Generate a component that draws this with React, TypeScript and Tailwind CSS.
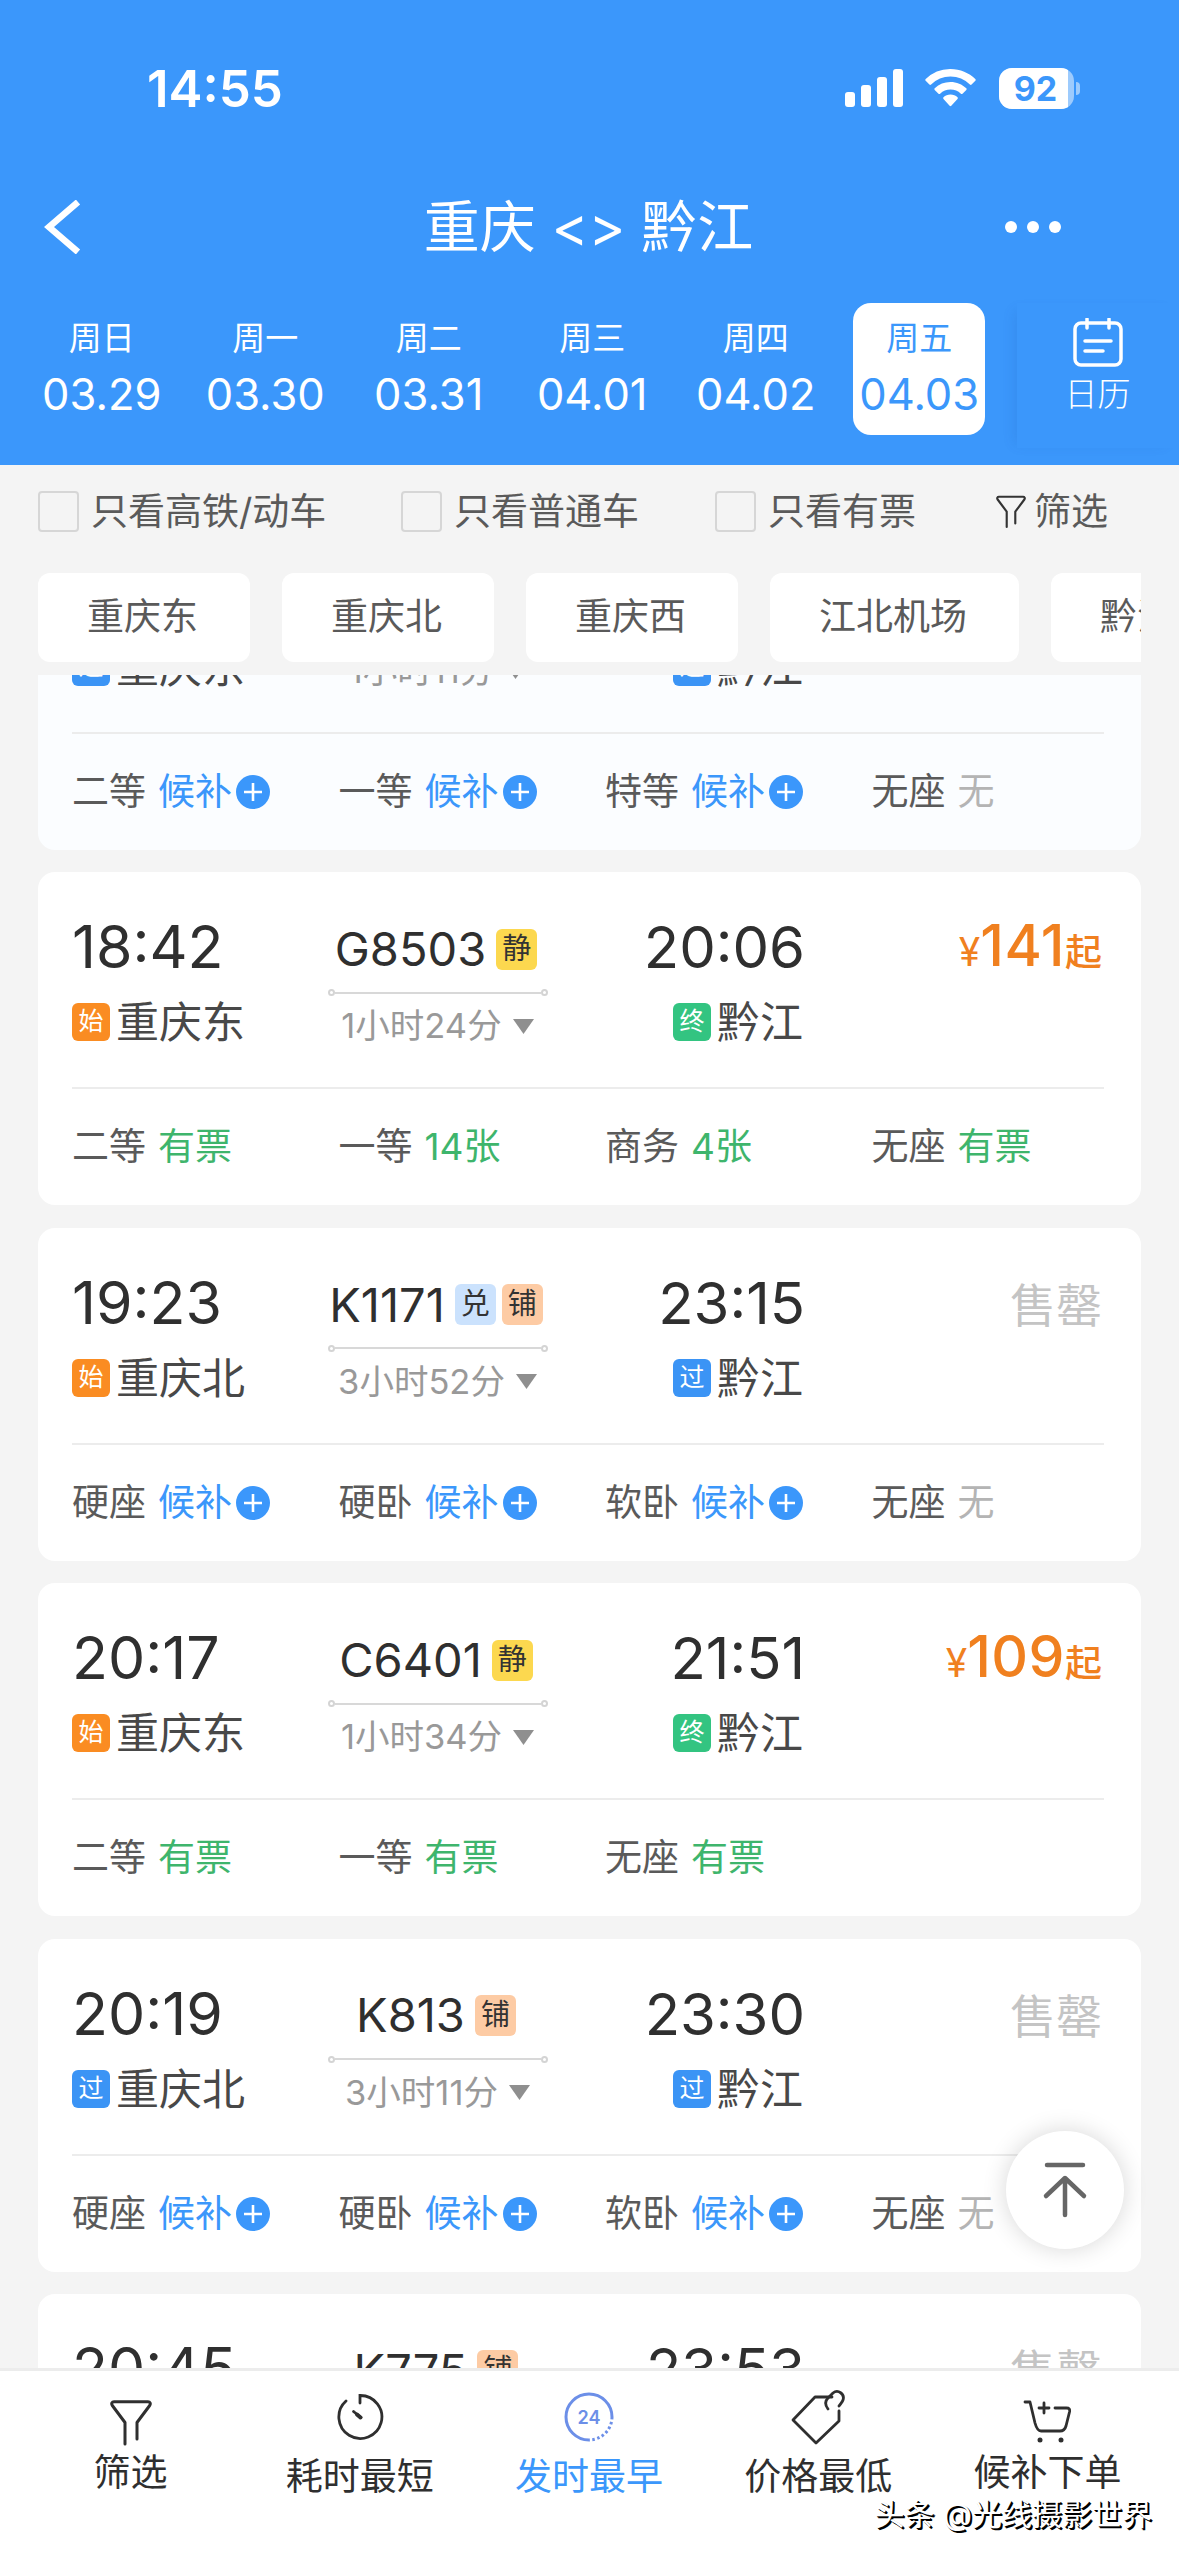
import clsx from "clsx";
import { ReactNode } from "react";

type Stop = { kind: "始" | "过" | "终"; name: string };
type Seat = { type: string; left: string };
type Train = {
  no: string;
  depart: string;
  arrive: string;
  from: Stop;
  to: Stop;
  duration: string;
  tags: string[];
  price?: string;
  seats: Seat[];
  expired?: boolean;
};

const days = [
  { week: "周日", date: "03.29" },
  { week: "周一", date: "03.30" },
  { week: "周二", date: "03.31" },
  { week: "周三", date: "04.01" },
  { week: "周四", date: "04.02" },
  { week: "周五", date: "04.03", active: true },
];

const stations = ["重庆东", "重庆北", "重庆西", "江北机场", "黔江"];

const waitlistSeats: Seat[] = [
  { type: "硬座", left: "候补" },
  { type: "硬卧", left: "候补" },
  { type: "软卧", left: "候补" },
  { type: "无座", left: "无" },
];

const trains: Train[] = [
  {
    no: "G3723",
    depart: "18:31",
    arrive: "19:42",
    from: { kind: "过", name: "重庆东" },
    to: { kind: "过", name: "黔江" },
    duration: "1小时11分",
    tags: [],
    expired: true,
    seats: [
      { type: "二等", left: "候补" },
      { type: "一等", left: "候补" },
      { type: "特等", left: "候补" },
      { type: "无座", left: "无" },
    ],
  },
  {
    no: "G8503",
    depart: "18:42",
    arrive: "20:06",
    from: { kind: "始", name: "重庆东" },
    to: { kind: "终", name: "黔江" },
    duration: "1小时24分",
    tags: ["静"],
    price: "141",
    seats: [
      { type: "二等", left: "有票" },
      { type: "一等", left: "14张" },
      { type: "商务", left: "4张" },
      { type: "无座", left: "有票" },
    ],
  },
  {
    no: "K1171",
    depart: "19:23",
    arrive: "23:15",
    from: { kind: "始", name: "重庆北" },
    to: { kind: "过", name: "黔江" },
    duration: "3小时52分",
    tags: ["兑", "铺"],
    seats: waitlistSeats,
  },
  {
    no: "C6401",
    depart: "20:17",
    arrive: "21:51",
    from: { kind: "始", name: "重庆东" },
    to: { kind: "终", name: "黔江" },
    duration: "1小时34分",
    tags: ["静"],
    price: "109",
    seats: [
      { type: "二等", left: "有票" },
      { type: "一等", left: "有票" },
      { type: "无座", left: "有票" },
    ],
  },
  {
    no: "K813",
    depart: "20:19",
    arrive: "23:30",
    from: { kind: "过", name: "重庆北" },
    to: { kind: "过", name: "黔江" },
    duration: "3小时11分",
    tags: ["铺"],
    seats: waitlistSeats,
  },
  {
    no: "K775",
    depart: "20:45",
    arrive: "23:53",
    from: { kind: "过", name: "重庆北" },
    to: { kind: "过", name: "黔江" },
    duration: "3小时8分",
    tags: ["铺"],
    seats: waitlistSeats,
  },
];

const stopColors = {
  始: "bg-[#fa8c22]",
  过: "bg-[#3b94f5]",
  终: "bg-[#33c481]",
};

const tagColors: Record<string, string> = {
  静: "bg-[#fcd84f]",
  兑: "bg-[#cbe2fd]",
  铺: "bg-[#fdcba4]",
};

function StatusBar() {
  return (
    <div className="h-[176px] pt-[58px] pl-[147px] pr-[99px] flex items-start justify-between">
      <span className="text-[51px] leading-[62px] font-semibold">14:55</span>
      <div className="flex items-center h-[60px]">
        <svg width="58" height="38" viewBox="0 0 58 38" fill="white" className="mr-[22px]">
          <rect x="0" y="23" width="10" height="15" rx="3" />
          <rect x="16" y="16" width="10" height="22" rx="3" />
          <rect x="32" y="8" width="10" height="30" rx="3" />
          <rect x="48" y="0" width="10" height="38" rx="3" />
        </svg>
        <svg width="51" height="38" viewBox="0 0 51 38" fill="white" className="mr-[23px]">
          <path d="M25.500 0C35.200 0 44 3.800 50.300 10.100a1.200 1.200 0 0 1 0 1.700l-3.700 3.700a1.200 1.200 0 0 1-1.700 0A27.600 27.600 0 0 0 25.500 7.500 27.600 27.600 0 0 0 6.100 15.500a1.200 1.200 0 0 1-1.700 0L.7 11.800a1.200 1.200 0 0 1 0-1.700A35 35 0 0 1 25.500 0Z" />
          <path d="M25.500 13c6.100 0 11.700 2.400 15.800 6.300a1.200 1.200 0 0 1 0 1.700l-3.800 3.700a1.200 1.200 0 0 1-1.600 0 15 15 0 0 0-20.800 0 1.200 1.200 0 0 1-1.600 0L9.700 21a1.200 1.200 0 0 1 0-1.700A22.800 22.800 0 0 1 25.500 13Z" />
          <path d="M25.500 25.500c2.700 0 5.200 1 7 2.700a1.200 1.200 0 0 1 0 1.700l-6.200 6.800a1.200 1.200 0 0 1-1.700 0l-6.100-6.800a1.200 1.200 0 0 1 0-1.700c1.800-1.700 4.300-2.700 7-2.700Z" />
        </svg>
        <div className="w-[75px] h-[41px] rounded-[13px] overflow-hidden bg-white/50 flex">
          <div className="w-[69px] pl-[4px] bg-white text-[#3b97fb] text-[34px] leading-[41px] font-bold text-center">92</div>
        </div>
        <div className="w-[4px] h-[13px] ml-[2px] rounded-r-full bg-white/50" />
      </div>
    </div>
  );
}

function DateTabs() {
  return (
    <div className="h-[162px] flex">
      <div className="pl-[20px] flex w-[1017px]">
        {days.map((day) => (
          <div key={day.date} className="w-[163.500px] shrink-0 flex justify-center">
            <div
              className={clsx(
                "w-[132px] h-[132px] pt-[11px] rounded-[18px] flex flex-col items-center",
                day.active && "bg-white text-[#3b97fb]"
              )}
            >
              <span className="text-[33px] leading-[48px]">{day.week}</span>
              <span className="text-[43.500px] leading-[64px] whitespace-nowrap">{day.date}</span>
            </div>
          </div>
        ))}
      </div>
      <div className="flex-1 h-[145px] flex flex-col items-center pt-[15px] pr-[1px] shadow-[-8px_2px_12px_-6px_rgba(20,80,160,0.14)]">
        <svg width="50" height="50" viewBox="0 0 50 50" fill="none" stroke="white" strokeWidth="3.500" strokeLinecap="round">
          <rect x="2" y="5" width="46" height="42" rx="6" />
          <path d="M14 1v9M36 1v9M12 23h26M12 33h18" />
        </svg>
        <span className="text-[33px] leading-[46px] mt-[3px] font-light">日历</span>
      </div>
    </div>
  );
}

function FunnelIcon({ className }: { className?: string }) {
  return (
    <svg viewBox="0 0 42 46" fill="none" stroke="currentColor" strokeWidth="3" strokeLinecap="round" strokeLinejoin="round" className={className}>
      <path d="M15 44V22.500L2.300 5.500C1 3.500 2 1.700 4 1.700h34c2 0 3 1.800 1.700 3.800L27 22.500V39" />
    </svg>
  );
}

function CheckFilter({ label, className }: { label: string; className?: string }) {
  return (
    <label className={clsx("flex items-center", className)}>
      <span className="w-[41px] h-[41px] border-2 border-[#d6d6d6] rounded-[4px] mr-[12px]" />
      {label}
    </label>
  );
}

function Filters() {
  return (
    <>
      <div className="h-[108px] pb-[15px] pl-[38px] flex items-center text-[37px] text-[#5a5a5a]">
        <CheckFilter label="只看高铁/动车" className="w-[363px]" />
        <CheckFilter label="只看普通车" className="w-[314px]" />
        <CheckFilter label="只看有票" className="w-[281px]" />
        <FunnelIcon className="w-[30px] h-[34px] mr-[8px] text-[#333]" />
        <span>筛选</span>
      </div>
      <div className="mx-[38px] flex gap-[32px] overflow-hidden text-[37px] text-[#5a5a5a]">
        {stations.map((name) => (
          <div key={name} className="h-[89px] pl-[49px] pr-[52px] bg-white rounded-[12px] flex items-center shrink-0 pb-[2px]">
            {name}
          </div>
        ))}
      </div>
    </>
  );
}

function StopName({ stop }: { stop: Stop }) {
  return (
    <div className="flex items-center text-[43px] leading-[60px] text-[#484848]">
      <span className={clsx("w-[38px] h-[38px] mr-[6px] rounded-[6px] text-white text-[25px] leading-[37px] text-center", stopColors[stop.kind])}>
        {stop.kind}
      </span>
      {stop.name}
    </div>
  );
}

function SeatInfo({ seat }: { seat: Seat }) {
  const waiting = seat.left === "候补";

  return (
    <div className="w-[266.500px] shrink-0 flex items-center text-[37px] leading-[54px] text-[#5a5a5a]">
      <span className="mr-[12px]">{seat.type}</span>
      <span className={waiting ? "text-[#3b97fb]" : seat.left === "无" ? "text-[#b4b4b4]" : "text-[#3eb56c]"}>{seat.left}</span>
      {waiting && (
        <svg width="34" height="34" viewBox="0 0 34 34" className="ml-[4px]">
          <circle cx="17" cy="17" r="17" fill="#3b97fb" />
          <path d="M8 17h18M17 8v18" stroke="white" strokeWidth="2.600" />
        </svg>
      )}
    </div>
  );
}

function TrainCard({ train }: { train: Train }) {
  return (
    <div className={clsx("h-[333px] shrink-0 pl-[34px] pr-[37px] rounded-[17px]", train.expired ? "bg-[#fbfdff]" : "bg-white")}>
      <div className="h-[217px] pt-[39px] flex border-b-2 border-[#ececec]">
        <div className="w-[250px]">
          <div className="text-[59px] leading-[72px] text-[#2f2f2f]">{train.depart}</div>
          <div className="mt-[9px]">
            <StopName stop={train.from} />
          </div>
        </div>

        {/* train number, tags and travel time */}
        <div className="w-[232px] flex flex-col items-center">
          <div className="h-[76px] mr-[4px] flex items-center gap-[6px] whitespace-nowrap">
            <span className="text-[47px] mr-[4px] text-[#2f2f2f]">{train.no}</span>
            {train.tags.map((tag) => (
              <span key={tag} className={clsx("w-[41px] h-[41px] rounded-[6px] text-[29px] leading-[39px] text-center text-[#333]", tagColors[tag])}>
                {tag}
              </span>
            ))}
          </div>
          <div className="w-[220px] h-[7px] mt-[2px] flex items-center">
            <span className="w-[7px] h-[7px] rounded-full border-2 border-[#d4d4d4]" />
            <span className="flex-1 h-[2px] bg-[#d8d8d8]" />
            <span className="w-[7px] h-[7px] rounded-full border-2 border-[#d4d4d4]" />
          </div>
          <div className="flex items-center mt-[4px] text-[34.500px] leading-[52px] text-[#999]">
            {train.duration}
            <svg width="23" height="15" viewBox="0 0 23 15" className="ml-[10px]">
              <path d="M1 0h21L11.500 15Z" fill="#8f8f8f" />
            </svg>
          </div>
        </div>

        <div className="w-[250px] flex flex-col items-end">
          <div className="text-[58px] leading-[72px] -mr-px text-[#2f2f2f]">{train.arrive}</div>
          <div className="mt-[9px] mr-px">
            <StopName stop={train.to} />
          </div>
        </div>

        <div className="w-[300px] pr-[2px] text-right">
          {train.price ? (
            <div className="text-[#f0801f] leading-[70px] font-medium">
              <span className="text-[39px] font-normal">¥</span>
              <span className="text-[57px] tracking-[0.5px]">{train.price}</span>
              <span className="text-[37px]">起</span>
            </div>
          ) : (
            <div className="text-[46px] leading-[76px] text-[#c4c4c4]">售罄</div>
          )}
        </div>
      </div>
      <div className="flex pt-[31px]">
        {train.seats.map((seat) => (
          <SeatInfo key={seat.type} seat={seat} />
        ))}
      </div>
    </div>
  );
}

function NavItem({ label, active, className, children }: { label: string; active?: boolean; className?: string; children: ReactNode }) {
  return (
    <div className={clsx("flex-1 flex flex-col items-center text-[37px] leading-[50px]", active ? "text-[#3b97fb]" : "text-[#2f2f2f]", className)}>
      {children}
      <span className="whitespace-nowrap">{label}</span>
    </div>
  );
}

function BottomNav() {
  return (
    <div className="h-[188px] shrink-0 bg-white border-t-3 border-[#ececec] pl-[16px] pr-[17px] flex relative">
      <NavItem label="筛选" className="pt-[29px]">
        <FunnelIcon className="w-[42px] h-[46px] mb-[2px]" />
      </NavItem>
      <NavItem label="耗时最短" className="pt-[22px]">
        <svg width="48" height="48" viewBox="0 0 48 48" fill="none" stroke="currentColor" strokeWidth="2.800" strokeLinecap="round" className="mb-[11px]">
          <path d="M24 10V2.500a21.500 21.500 0 1 1-14 5.500" />
          <path d="m17.500 18.500 7.500 6" />
          <path d="m21 21.500 3.500 3" strokeWidth="4" />
        </svg>
      </NavItem>
      <NavItem label="发时最早" active className="pt-[21px]">
        <svg width="50" height="50" viewBox="0 0 50 50" fill="none" stroke="#6c8fe8" strokeWidth="3" className="mb-[10px]">
          <path d="M25 48A23 23 0 1 1 48 25" />
          <path d="M48 25A23 23 0 0 1 25 48" strokeDasharray="2.500 2.500" />
          <text x="25" y="32" fill="#6c8fe8" stroke="none" fontSize="18" fontWeight="600" textAnchor="middle">
            24
          </text>
        </svg>
      </NavItem>
      <NavItem label="价格最低" className="pt-[18px]">
        <svg width="58" height="58" viewBox="0 0 58 58" fill="none" stroke="currentColor" strokeWidth="2.800" strokeLinecap="round" strokeLinejoin="round" className="mb-[5px]">
          <path d="M43 8H26L4 31l23 23 23-22V22" />
          <path d="M39 20c-3-4-3-8 0-11l5-5c5-4 12 1 10 7-.7 2-2 3-4 6" />
        </svg>
      </NavItem>
      <NavItem label="候补下单" className="pt-[28px]">
        <svg width="48" height="45" viewBox="0 0 48 45" fill="none" stroke="currentColor" strokeWidth="2.800" strokeLinecap="round" strokeLinejoin="round" className="mb-[4px]">
          <path d="M2 3h5l5 21c1.500 5.500 3 8 6 8h19c3 0 5-1.500 6-5l3.500-14c.6-3-.5-4-3-4H32" />
          <path d="M21 4v10M16 9h10" />
          <circle cx="17" cy="41" r="2.500" fill="currentColor" stroke="none" />
          <circle cx="38" cy="41" r="2.500" fill="currentColor" stroke="none" />
        </svg>
      </NavItem>
      <span className="absolute right-[27px] bottom-[20px] text-[30px] leading-[44px] text-white whitespace-nowrap [text-shadow:2px_2px_0_#000,1px_1px_0_#000]">
        头条 @光线摄影世界
      </span>
    </div>
  );
}

export default function App() {
  return (
    <div className="w-[1179px] h-[2556px] overflow-hidden bg-[#f4f4f4] flex flex-col relative font-[Inter,'Noto_Sans_CJK_SC',sans-serif]">
      <header className="h-[465px] shrink-0 bg-[#3b97fb] text-white">
        <StatusBar />
        <div className="h-[127px] pb-[25px] pl-[44px] pr-[44px] flex items-center justify-between">
          <svg width="128" height="54" viewBox="0 0 128 54" fill="none" stroke="white" strokeWidth="6.500">
            <path d="M34 2 5 27l29 25" />
          </svg>
          <h1 className="text-[56px] leading-[80px] whitespace-pre">重庆 &lt;&gt; 黔江</h1>
          <svg width="130" height="12" viewBox="0 0 130 12" fill="white">
            <circle cx="6" cy="6" r="6" />
            <circle cx="28" cy="6" r="6" />
            <circle cx="50" cy="6" r="6" />
          </svg>
        </div>
        <DateTabs />
      </header>

      <div className="h-[210px] shrink-0">
        <Filters />
      </div>

      {/* list is scrolled so only the bottom of the first card shows */}
      <div className="flex-1 min-h-0 overflow-hidden px-[38px]">
        <div className="-mt-[158px] flex flex-col gap-[22.400px]">
          {trains.map((train) => (
            <TrainCard key={train.no} train={train} />
          ))}
        </div>
      </div>

      <BottomNav />

      {/* back to top */}
      <button className="absolute left-[1006px] top-[2131px] w-[118px] h-[118px] rounded-full bg-white flex items-center justify-center shadow-[0_0_24px_rgba(0,0,0,0.16)]">
        <svg width="46" height="56" viewBox="0 0 46 56" fill="none" stroke="#666" strokeWidth="4.500" strokeLinecap="round" strokeLinejoin="round">
          <path d="M5 3h36M23 53V17M4 34l19-18 19 18" />
        </svg>
      </button>
    </div>
  );
}
